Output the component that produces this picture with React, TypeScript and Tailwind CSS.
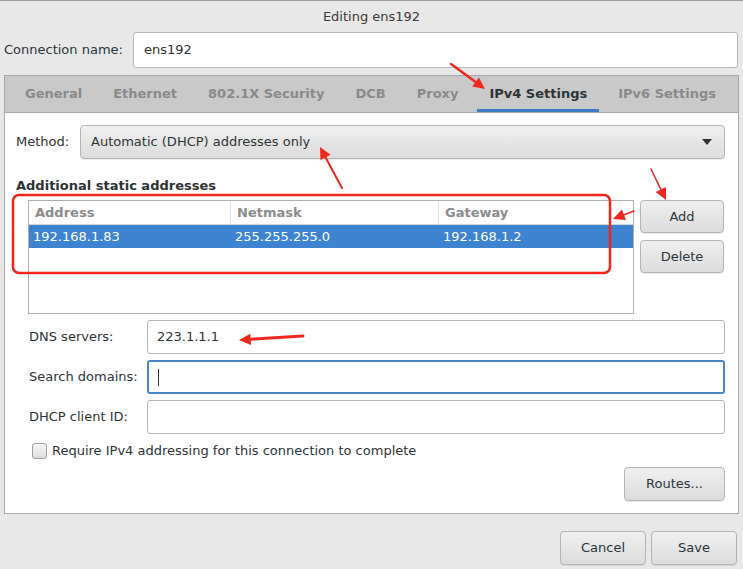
const btn =
  "flex items-center justify-center rounded-[4px] border border-[#b4b4b4] bg-gradient-to-b from-[#f0f0f0] to-[#dcdcdc] text-[#2e3436] shadow-[0_1px_0_rgba(0,0,0,0.08)]";

const Arrow: React.FC<{ x1: number; y1: number; x2: number; y2: number; w?: number }> = ({ x1, y1, x2, y2, w = 2.5 }) => {
  const a = Math.atan2(y2 - y1, x2 - x1);
  const len = 13;
  const spread = 0.45;
  const p1 = [x2 - len * Math.cos(a - spread), y2 - len * Math.sin(a - spread)];
  const p2 = [x2 - len * Math.cos(a + spread), y2 - len * Math.sin(a + spread)];
  const bx = x2 - len * 0.8 * Math.cos(a);
  const by = y2 - len * 0.8 * Math.sin(a);
  return (
    <g>
      <line x1={x1} y1={y1} x2={bx} y2={by} stroke="#f0271c" strokeWidth={w} strokeLinecap="round" />
      <polygon points={`${x2},${y2} ${p1[0]},${p1[1]} ${p2[0]},${p2[1]}`} fill="#f0271c" />
    </g>
  );
};

const Field: React.FC<{ label: string; value?: string; focused?: boolean }> = ({ label, value, focused }) => (
  <div className="flex items-center h-[34px]">
    <div className="w-[119px] pl-[1px]">{label}</div>
    <div
      className={
        "flex-1 h-full flex items-center px-[9px] rounded-[3px] bg-white " +
        (focused ? "border-2 border-[#4a86c8]" : "border border-[#b8b8b8]")
      }
    >
      {value}
      {focused && <span className="w-[1px] h-[17px] bg-[#2e3436]" />}
    </div>
  </div>
);

export default function App() {
  const tabs = ["General", "Ethernet", "802.1X Security", "DCB", "Proxy", "IPv4 Settings", "IPv6 Settings"];
  return (
    <div
      className="relative w-[743px] h-[569px] bg-[#e8e8e8] text-[13px] text-[#2e3436] overflow-hidden border-t border-[#9a9a9a]"
      style={{ fontFamily: '"DejaVu Sans", sans-serif' }}
    >
      <div className="h-[31px] flex items-center justify-center text-[#3a3a3a]">Editing ens192</div>

      <div className="flex items-center h-[36px] pl-[4px] pr-[5px]">
        <div className="w-[129px]">Connection name:</div>
        <div className="flex-1 h-full flex items-center px-[10px] bg-white border border-[#b8b8b8] rounded-[3px]">ens192</div>
      </div>

      <div className="mx-[4px] mt-[7px] h-[439px] border border-[#a8a8a8] bg-white flex flex-col">
        <div className="h-[37px] bg-[#c9c9c9] border-b border-[#a8a8a8] flex items-stretch gap-[7px] pl-[8px] font-bold">
          {tabs.map((t) => (
            <div
              key={t}
              className={
                "px-[12px] flex items-center pt-[2px] border-b-[3px] " +
                (t === "IPv4 Settings" ? "border-[#3d7cc4] text-[#2e3436]" : "border-transparent text-[#8a8a8a]")
              }
            >
              {t}
            </div>
          ))}
        </div>

        <div className="flex-1 flex flex-col pl-[11px] pr-[13px] pt-[12px]">
          <div className="flex items-center h-[34px]">
            <div className="w-[64px]">Method:</div>
            <div className={btn + " flex-1 h-full !justify-between px-[10px]"}>
              <span>Automatic (DHCP) addresses only</span>
              <svg width="12" height="8" viewBox="0 0 12 8" className="mr-[1px]">
                <polygon points="1,1 11,1 6,7" fill="#2e3436" />
              </svg>
            </div>
          </div>

          <div className="font-bold mt-[19px] leading-[15px]">Additional static addresses</div>

          <div className="flex mt-[7px] gap-[6px]">
            <div className="ml-[12px] w-[606px] h-[114px] border border-[#b0b0b0] bg-white">
              <div className="flex h-[24px] border-b border-[#d8d8d8] font-bold text-[#8c8c8c]">
                <div className="w-[202px] border-r border-[#e0e0e0] px-[6px] flex items-center">Address</div>
                <div className="w-[208px] border-r border-[#e0e0e0] px-[6px] flex items-center">Netmask</div>
                <div className="flex-1 px-[6px] flex items-center">Gateway</div>
              </div>
              <div className="flex h-[23px] bg-[#3d83d0] text-white">
                <div className="w-[202px] px-[4px] flex items-center">192.168.1.83</div>
                <div className="w-[208px] px-[4px] flex items-center">255.255.255.0</div>
                <div className="flex-1 px-[4px] flex items-center">192.168.1.2</div>
              </div>
            </div>
            <div className="flex flex-col gap-[7px] w-[84px]">
              <div className={btn + " h-[33px]"}>Add</div>
              <div className={btn + " h-[33px]"}>Delete</div>
            </div>
          </div>

          <div className="flex flex-col gap-[6px] mt-[6px] pl-[12px]">
            <Field label="DNS servers:" value="223.1.1.1" />
            <Field label="Search domains:" focused />
            <Field label="DHCP client ID:" />
          </div>

          <div className="flex items-center mt-[8px] pl-[16px] h-[18px]">
            <div className="w-[15px] h-[16px] rounded-[3px] border border-[#a0a0a0] bg-gradient-to-b from-[#f6f6f6] to-[#dedede] mr-[5px]" />
            <span>Require IPv4 addressing for this connection to complete</span>
          </div>

          <div className="flex justify-end mt-[7px]">
            <div className={btn + " w-[101px] h-[34px]"}>Routes...</div>
          </div>
        </div>
      </div>

      <div className="flex justify-end gap-[5px] pr-[6px] mt-[17px]">
        <div className={btn + " w-[86px] h-[34px]"}>Cancel</div>
        <div className={btn + " w-[86px] h-[34px]"}>Save</div>
      </div>

      <svg className="absolute left-0 top-0 pointer-events-none" width="743" height="569">
        <rect x="13" y="194" width="597" height="78" rx="6" fill="none" stroke="#f0271c" strokeWidth="2.5" />
        <Arrow x1={451} y1={63} x2={485} y2={88} />
        <Arrow x1={342} y1={187} x2={320} y2={146} w={2} />
        <Arrow x1={651} y1={168} x2={666} y2={199} w={1.5} />
        <Arrow x1={634} y1={210} x2={613} y2={218} w={1.5} />
        <Arrow x1={303} y1={335} x2={239} y2={339} w={3} />
      </svg>
    </div>
  );
}
